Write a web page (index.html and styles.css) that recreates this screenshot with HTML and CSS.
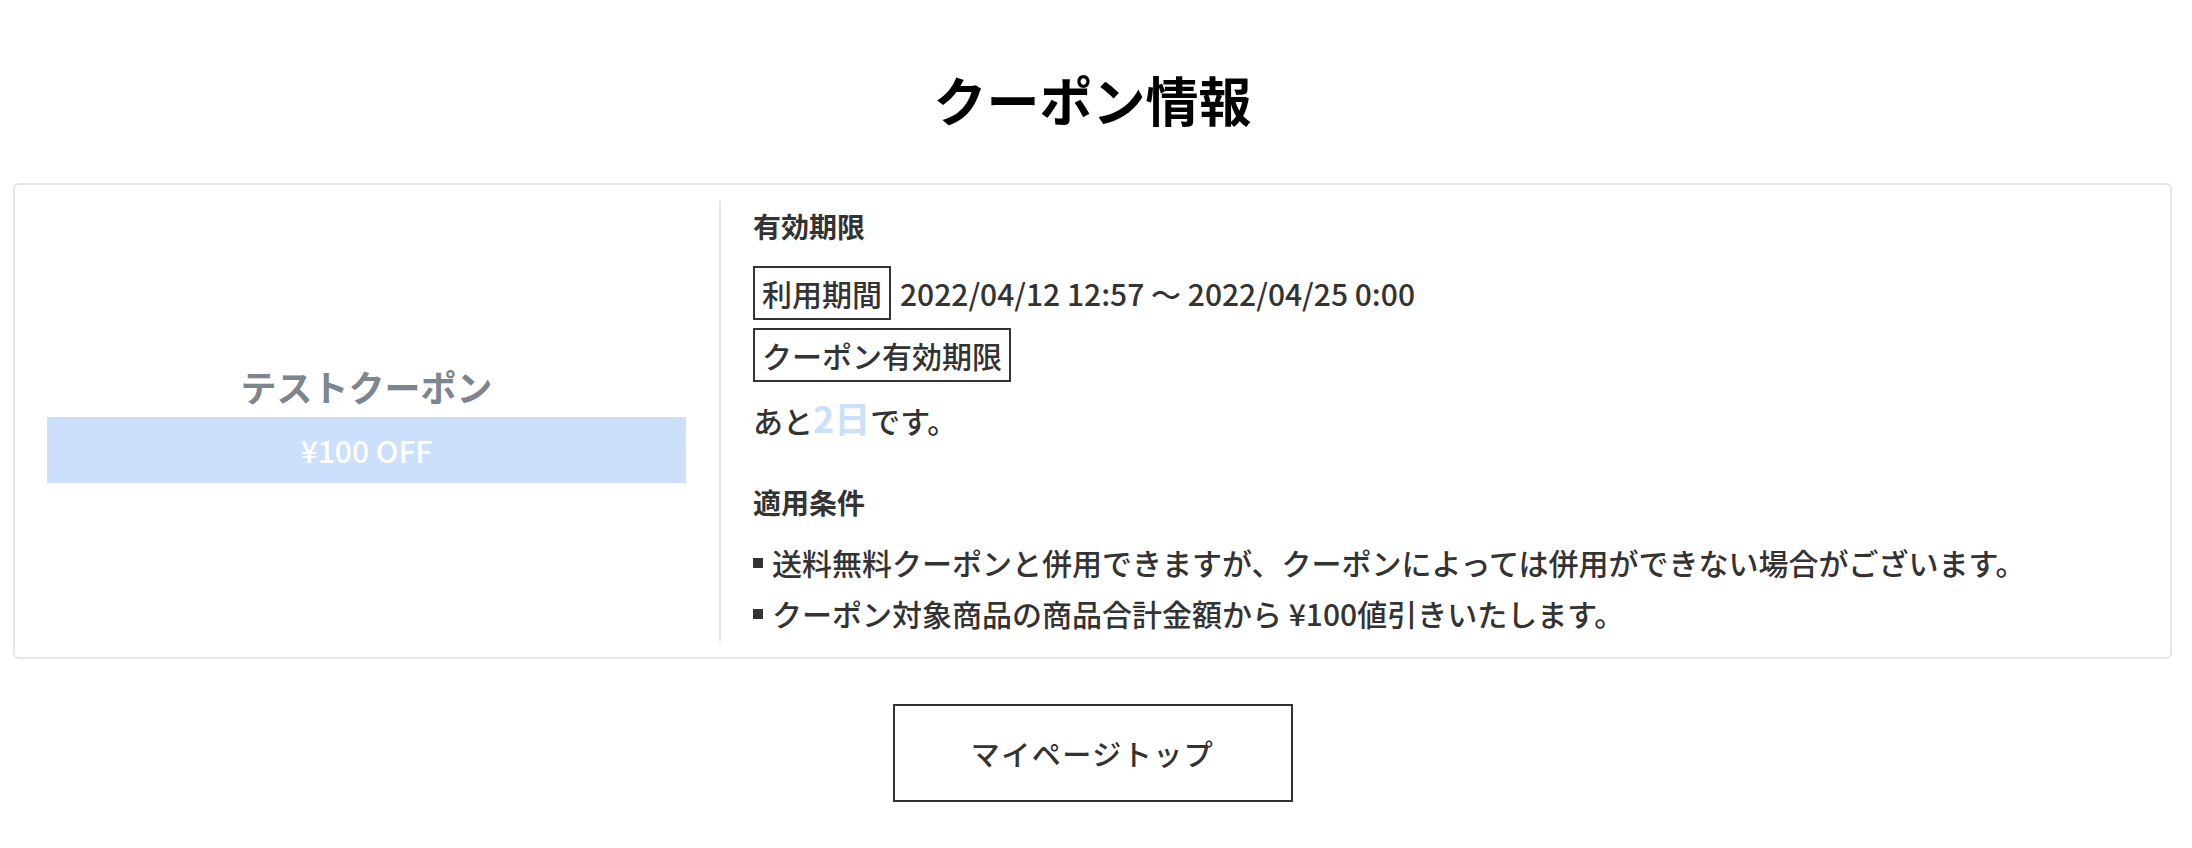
FILE: index.html
```html
<html lang="ja">
	<head>
		<meta charset="utf-8" />
		<title>クーポン情報</title>
		<link rel="stylesheet" href="styles.css">
	</head>
	<body>
		<h1 class="page-title">クーポン情報</h1>

		<div class="coupon-card">
			<div class="coupon-main">
				<p class="coupon-name">テストクーポン</p>
				<div class="coupon-value">¥100 OFF</div>
			</div>

			<div class="coupon-detail">
				<h3 class="detail-heading">有効期限</h3>
				<div class="term-row first">
					<span class="term-badge">利用期間</span>
					<span class="term-text">2022/04/12 12:57 〜 2022/04/25 0:00</span>
				</div>
				<div class="term-row">
					<span class="term-badge">クーポン有効期限</span>
				</div>
				<p class="remain">あと<strong class="remain-days">2日</strong>です。</p>

				<h3 class="detail-heading second">適用条件</h3>
				<ul class="conditions">
					<li>送料無料クーポンと併用できますが、クーポンによっては併用ができない場合がございます。</li>
					<li>クーポン対象商品の商品合計金額から ¥100値引きいたします。</li>
				</ul>
			</div>
		</div>

		<div class="actions">
			<a class="btn-back" href="#">マイページトップ</a>
		</div>
	</body>
</html>
```

FILE: styles.css
```css
body
{
	margin: 0;
	padding: 0 7px 0 0;
	background: #ffffff;
	color: #333333;
	font-family: "Noto Sans CJK JP", "Noto Sans", sans-serif;
	font-weight: 500;
}

h1.page-title
{
	margin: 0;
	padding-top: 60px;
	font-size: 53px;
	line-height: 78px;
	font-weight: 700;
	color: #000000;
	text-align: center;
}

div.coupon-card
{
	display: flex;
	margin: 45px 13px 0 13px;
	padding: 16px 0;
	border: 2px solid #e6e6e6;
	border-radius: 6px;
}

div.coupon-main
{
	box-sizing: border-box;
	width: 706px;
	flex: none;
	padding: 0 33px 4px 32px;
	border-right: 2px solid #e6e6e6;
	display: flex;
	flex-direction: column;
	justify-content: center;
}

p.coupon-name
{
	margin: 0;
	font-size: 36px;
	line-height: 61px;
	font-weight: 700;
	color: #7d868f;
	text-align: center;
}

div.coupon-value
{
	height: 66px;
	line-height: 66px;
	background: #cce0fb;
	color: #ffffff;
	font-size: 30px;
	font-weight: 500;
	text-align: center;
}

div.coupon-detail
{
	flex: 1;
	padding: 4px 0 8px 32px;
}

h3.detail-heading
{
	margin: 0;
	font-size: 28px;
	line-height: 42px;
	font-weight: 700;
	color: #333333;
}

h3.detail-heading.second
{
	margin-top: 38px;
}

div.term-row
{
	display: flex;
	align-items: center;
	gap: 9px;
	margin-top: 8px;
	font-size: 30px;
}

div.term-row.first
{
	margin-top: 19px;
}

span.term-badge
{
	display: inline-block;
	padding: 0 7px;
	border: 2px solid #333333;
	line-height: 50px;
}

p.remain
{
	margin: 13px 0 0 0;
	font-size: 30px;
	line-height: 45px;
}

strong.remain-days
{
	color: #cce0fb;
	font-size: 36px;
	font-weight: 700;
}

ul.conditions
{
	margin: 19px 0 0 0;
	padding: 0;
	list-style: none;
	font-size: 30px;
	line-height: 40px;
}

ul.conditions li + li
{
	margin-top: 11px;
}

ul.conditions li::before
{
	content: "";
	display: inline-block;
	width: 10px;
	height: 10px;
	margin-right: 9px;
	background: #333333;
	vertical-align: 7px;
}

div.actions
{
	display: flex;
	justify-content: center;
	margin-top: 45px;
}

a.btn-back
{
	box-sizing: border-box;
	width: 400px;
	height: 98px;
	display: flex;
	align-items: center;
	justify-content: center;
	border: 2px solid #333333;
	color: #333333;
	font-size: 29px;
	font-weight: 500;
	letter-spacing: 1.5px;
	text-decoration: none;
}
```
